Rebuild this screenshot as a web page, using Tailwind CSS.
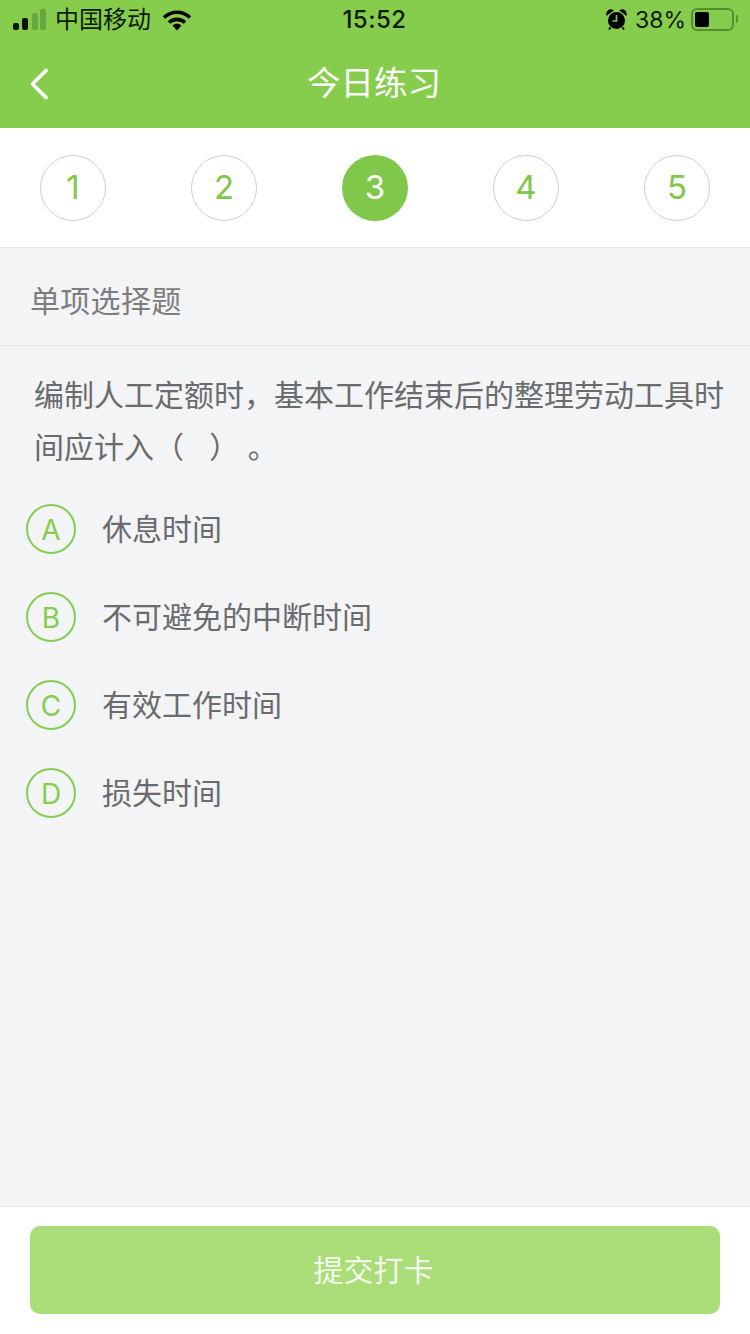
<!DOCTYPE html>
<html lang="zh-CN">
  <head>
    <meta charset="UTF-8" />
    <script src="https://cdn.jsdelivr.net/npm/@tailwindcss/browser@4"></script>
    <title>今日练习</title>
  </head>
  <body class="w-[750px] h-[1334px] overflow-hidden bg-[#f2f4f6] flex flex-col font-['Inter','Noto_Sans_CJK_SC',sans-serif]">
    <!-- header -->
    <header class="h-[128px] shrink-0 bg-[#87cd4d] flex flex-col">
      <div class="h-[40px] pl-[13px] pr-[12px] flex items-center justify-between text-[#0c1a05]">
        <div class="flex items-center w-[200px]">
          <svg width="34" height="21" viewBox="0 0 34 21" class="mt-[-1px]">
            <rect x="0" y="14" width="6" height="7" rx="2" fill="#0a1505" />
            <rect x="9" y="9" width="6" height="12" rx="2" fill="#0a1505" />
            <rect x="19" y="4" width="6" height="17" rx="2" fill="#6aa63f" />
            <rect x="27" y="0" width="6" height="21" rx="2" fill="#6aa63f" />
          </svg>
          <span class="ml-[8px] text-[24px] leading-[40px]">中国移动</span>
          <svg width="30" height="22" viewBox="0 0 30 22" class="ml-[11px] mt-[-1px]">
            <path d="M2 8.5C9.5 1.5 20.5 1.500 28 8.500" fill="none" stroke="#000" stroke-width="3.600" />
            <path d="M7 13.500C11.500 9.300 18.500 9.300 23 13.500" fill="none" stroke="#000" stroke-width="3.600" />
            <path d="M10.500 16.500C13 14 17 14 19.500 16.500L15 21.500Z" fill="#000" />
          </svg>
        </div>
        <span class="text-[24px] font-medium leading-[40px] tracking-[0.5px] ml-[-2px]">15:52</span>
        <div class="flex items-center justify-end w-[200px]">
          <svg width="21" height="22" viewBox="0 0 21 22" class="mt-[-2px]">
            <circle cx="10.500" cy="12.500" r="8.500" fill="#000" />
            <path d="M1 6.500C1 3 4 1 6.500 2.500ZM20 6.500C20 3 17 1 14.500 2.500Z" fill="#000" stroke="#000" stroke-width="1.500" />
            <path d="M10.500 7V13H6.500" fill="none" stroke="#87cd4d" stroke-width="1.600" />
            <path d="M4.500 19.500L3 21.500M16.500 19.500L18 21.500" stroke="#000" stroke-width="2" />
          </svg>
          <span class="ml-[8px] text-[23px] leading-[40px]">38%</span>
          <div class="ml-[5px] w-[43px] h-[23px] rounded-[6px] border-2 border-[#55902f] p-[2px] mt-[-2px]">
            <div class="w-[14px] h-full rounded-[2px] bg-black"></div>
          </div>
          <div class="ml-[2px] w-[2px] h-[8px] rounded-r-[2px] bg-[#55902f] mt-[-2px]"></div>
        </div>
      </div>
      <div class="relative flex-1 flex items-center justify-center">
        <svg width="20" height="32" viewBox="0 0 20 32" class="absolute left-[29px] top-[28px]">
          <path d="M17 2.500L3.500 16L17 29.500" fill="none" stroke="#fff" stroke-width="3.600" stroke-linecap="round" stroke-linejoin="round" />
        </svg>
        <h1 class="text-[33.500px] leading-none text-white ml-[-2px]">今日练习</h1>
      </div>
    </header>

    <!-- question numbers -->
    <nav class="h-[120px] shrink-0 bg-white border-b border-[#e6e7e9] px-[40px] flex items-center justify-between text-[33px] text-[#80c84a]">
      <div class="w-[66px] h-[66px] rounded-full border border-[#cfcfcf] flex items-center justify-center">1</div>
      <div class="w-[66px] h-[66px] rounded-full border border-[#cfcfcf] flex items-center justify-center">2</div>
      <div class="w-[66px] h-[66px] rounded-full bg-[#80c84a] text-white flex items-center justify-center">3</div>
      <div class="w-[66px] h-[66px] rounded-full border border-[#cfcfcf] flex items-center justify-center">4</div>
      <div class="w-[66px] h-[66px] rounded-full border border-[#cfcfcf] flex items-center justify-center">5</div>
    </nav>

    <div class="h-[98px] shrink-0 border-b border-[#e6e7e9] px-[30px] pt-[10px] flex items-center text-[30px] tracking-[0.3px] text-[#7c7d7f]">单项选择题</div>

    <main class="flex-1 min-h-0">
      <p class="pl-[35px] pr-[20px] pt-[23px] text-[30px] leading-[52px] text-[#6a6b6d] ml-[-1px]">编制人工定额时，基本工作结束后的整理劳动工具时间应计入（&nbsp;&nbsp;&nbsp;）&nbsp;。</p>
      <ul class="mt-[12px] pl-[26px]">
        <li class="h-[88px] flex items-center gap-[26px]">
          <span class="w-[50px] h-[50px] rounded-full border-2 border-[#86cc50] flex items-center justify-center pt-[2px] text-[28px] text-[#86cc50]">A</span>
          <span class="text-[30px] text-[#6a6b6d]">休息时间</span>
        </li>
        <li class="h-[88px] flex items-center gap-[26px]">
          <span class="w-[50px] h-[50px] rounded-full border-2 border-[#86cc50] flex items-center justify-center pt-[2px] text-[28px] text-[#86cc50]">B</span>
          <span class="text-[30px] text-[#6a6b6d]">不可避免的中断时间</span>
        </li>
        <li class="h-[88px] flex items-center gap-[26px]">
          <span class="w-[50px] h-[50px] rounded-full border-2 border-[#86cc50] flex items-center justify-center pt-[2px] text-[28px] text-[#86cc50]">C</span>
          <span class="text-[30px] text-[#6a6b6d]">有效工作时间</span>
        </li>
        <li class="h-[88px] flex items-center gap-[26px]">
          <span class="w-[50px] h-[50px] rounded-full border-2 border-[#86cc50] flex items-center justify-center pt-[2px] text-[28px] text-[#86cc50]">D</span>
          <span class="text-[30px] text-[#6a6b6d]">损失时间</span>
        </li>
      </ul>
    </main>

    <footer class="h-[128px] shrink-0 bg-white border-t border-[#e6e7e9] px-[30px] pt-[19px]">
      <button class="w-full h-[88px] rounded-[10px] bg-[#aadc78] pr-[3px] text-[30px] text-[#f4fbec]">提交打卡</button>
    </footer>
  </body>
</html>
